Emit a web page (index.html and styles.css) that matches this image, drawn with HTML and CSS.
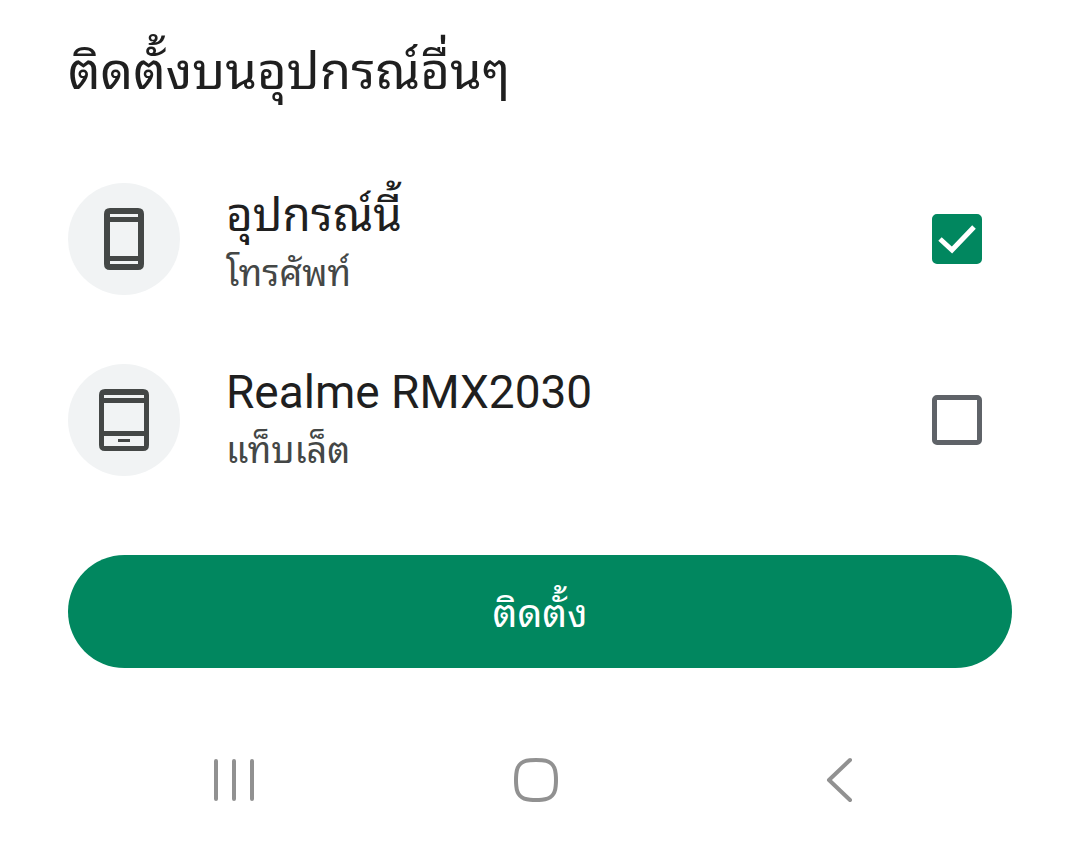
FILE: index.html
```html
<!DOCTYPE html>
<html lang="th">
<head>
<meta charset="utf-8">
<meta name="viewport" content="width=device-width, initial-scale=1">
<title>ติดตั้งบนอุปกรณ์อื่นๆ</title>
<link rel="stylesheet" href="styles.css">
</head>
<body>
<main class="sheet">
  <h1 class="title">ติดตั้งบนอุปกรณ์อื่นๆ</h1>
  <form class="form">
    <div class="devices">
      <label class="device" for="phone">
        <span class="avatar">
          <svg width="40" height="62" viewBox="0 0 40 62" aria-hidden="true"><path fill="#444746" fill-rule="evenodd" d="M6 0H34Q40 0 40 6V56Q40 62 34 62H6Q0 62 0 56V6Q0 0 6 0ZM6 6V9H34V6ZM6 14V48H34V14ZM6 53V56H34V53Z"/></svg>
        </span>
        <span class="text text-thai"><span class="name">อุปกรณ์นี้</span><span class="kind">โทรศัพท์</span></span>
        <input class="check" type="checkbox" id="phone" checked>
      </label>
      <label class="device" for="tablet">
        <span class="avatar">
          <svg width="50" height="62" viewBox="0 0 50 62" aria-hidden="true"><path fill="#444746" fill-rule="evenodd" d="M6 0H44Q50 0 50 6V56Q50 62 44 62H6Q0 62 0 56V6Q0 0 6 0ZM5 6V9H45V6ZM5 14V42H45V14ZM5 47V57H45V47ZM19 50H31V53H19Z"/></svg>
        </span>
        <span class="text"><span class="name">Realme RMX2030</span><span class="kind">แท็บเล็ต</span></span>
        <input class="check" type="checkbox" id="tablet">
      </label>
    </div>
    <button class="install" type="button">ติดตั้ง</button>
  </form>
</main>
<nav class="navbar">
  <button class="nav" type="button" aria-label="Recents"><svg width="44" height="46" viewBox="0 0 44 46"><path d="M4 4V42M22 4V42M40 4V42"/></svg></button>
  <button class="nav" type="button" aria-label="Home"><svg width="46" height="46" viewBox="0 0 46 46"><path d="M17 3.3Q23 2.7 29 3.3C38 4 42 8 42.7 17Q43.3 23 42.7 29C42 38 38 42 29 42.7Q23 43.3 17 42.7C8 42 4 38 3.3 29Q2.7 23 3.3 17C4 8 8 4 17 3.3Z"/></svg></button>
  <button class="nav" type="button" aria-label="Back"><svg width="30" height="46" viewBox="0 0 30 46"><path d="M26 3L5 23L26 43"/></svg></button>
</nav>
</body>
</html>
```
FILE: styles.css
```css
* { box-sizing: border-box; }
body {
  margin: 0;
  background: #fff;
  color: #1f1f1f;
  font-family: Roboto, "Noto Sans Thai Looped", Waree, Umpush, Loma, sans-serif;
}
.sheet { padding: 32px 68px 0; }
.title { margin: 0; font-size: 51px; line-height: 80px; font-weight: 400; }
.form { margin-top: 70px; }
.devices { display: flex; flex-direction: column; gap: 68px; }
.device { display: flex; align-items: center; height: 113px; }
.avatar {
  display: flex;
  align-items: center;
  justify-content: center;
  width: 112px;
  height: 112px;
  border-radius: 50%;
  background: #f1f3f4;
}
.text { display: flex; flex-direction: column; flex: 1; margin-left: 46px; padding-top: 2px; }
.text-thai { padding-top: 10px; }
.name { font-size: 46px; line-height: 60px; }
.kind { font-size: 36px; line-height: 58px; color: #444746; }
.check {
  appearance: none;
  width: 50px;
  height: 50px;
  margin: 0 30px 0 0;
  border: 5px solid #5f6368;
  border-radius: 5px;
}
.check:checked {
  border-color: #01875f;
  background: #01875f url("data:image/svg+xml,%3Csvg xmlns='http://www.w3.org/2000/svg' viewBox='0 0 40 40'%3E%3Cpath d='M3 20L15 31L37 8' fill='none' stroke='white' stroke-width='5'/%3E%3C/svg%3E") center / 40px no-repeat;
}
.install {
  display: block;
  width: 100%;
  height: 113px;
  margin-top: 79px;
  padding: 0 0 4px;
  border: 0;
  border-radius: 57px;
  background: #01875f;
  color: #fff;
  font-family: inherit;
  font-size: 39px;
}
.navbar { display: flex; justify-content: space-between; padding: 89px 226px 0 212px; }
.nav { display: flex; padding: 0; border: 0; background: none; }
.nav:nth-child(2) { margin-right: 8px; }
.nav svg { fill: none; stroke: #919191; stroke-width: 4; stroke-linecap: round; stroke-linejoin: round; }
```
